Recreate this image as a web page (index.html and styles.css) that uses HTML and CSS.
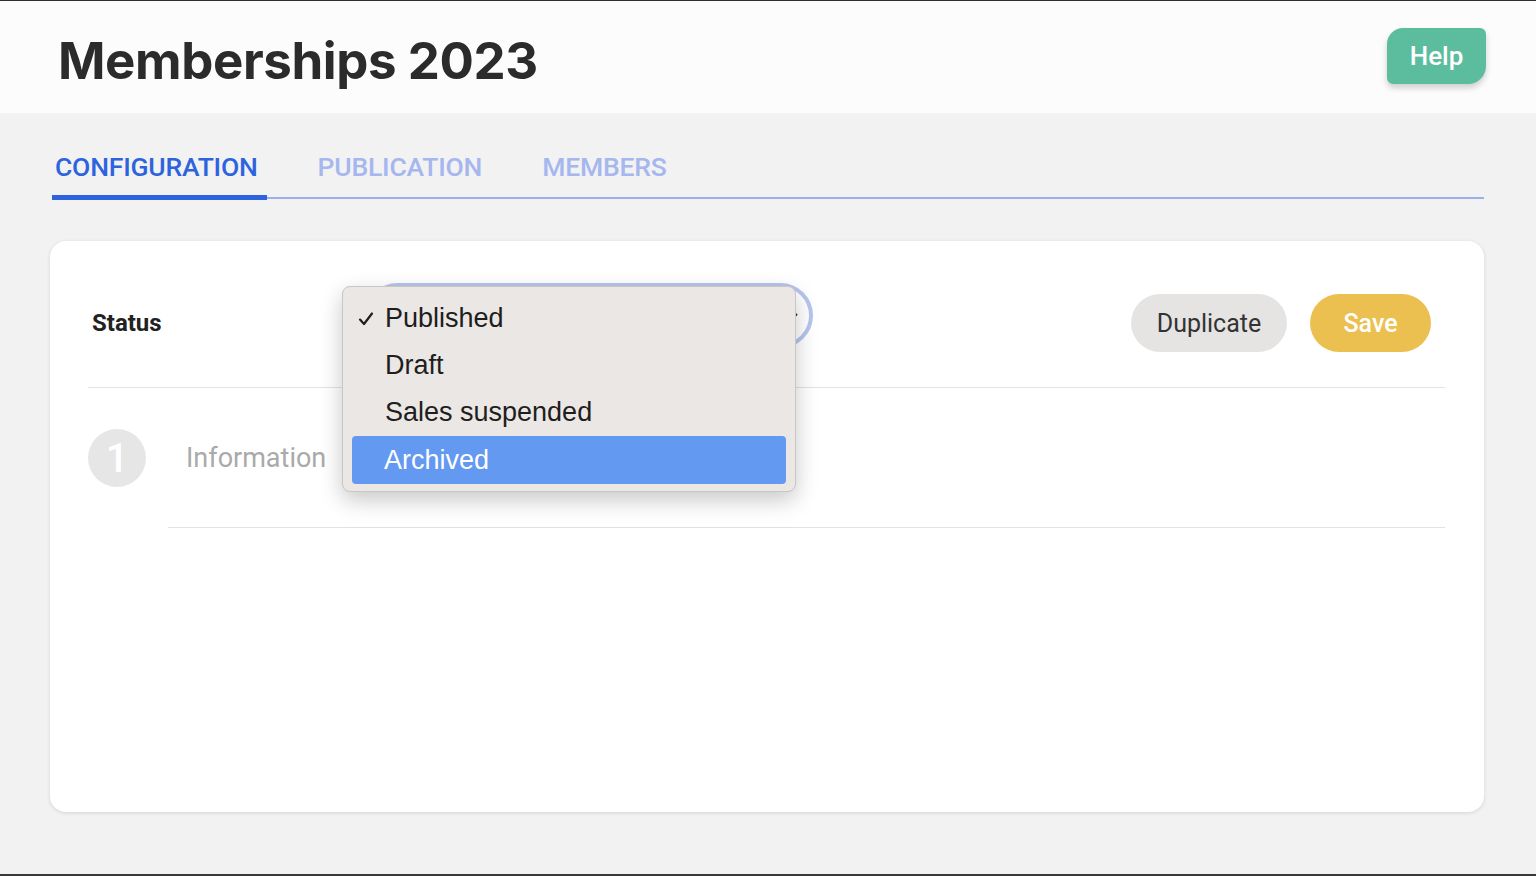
FILE: index.html
```html
<!DOCTYPE html>
<html lang="en">
<head>
<meta charset="utf-8">
<title>Memberships 2023</title>
<link rel="stylesheet" href="styles.css">
</head>
<body>
<div class="page">
  <header class="topbar">
    <h1 class="title">Memberships 2023</h1>
    <button class="help-btn">Help</button>
  </header>

  <main class="content">
    <nav class="tabs">
      <a class="tab active">CONFIGURATION</a>
      <a class="tab">PUBLICATION</a>
      <a class="tab">MEMBERS</a>
    </nav>

    <section class="card">
      <div class="status-row">
        <span class="status-label">Status</span>
        <div class="select-wrap">
          <div class="select">
            <svg class="chevron" viewBox="0 0 12 8" width="12" height="8"><path d="M1.5 1.5 6 6l4.5-4.5" fill="none" stroke="#222" stroke-width="1.8" stroke-linecap="round" stroke-linejoin="round"/></svg>
          </div>
          <ul class="menu">
            <li class="menu-item checked">
              <svg class="check" viewBox="0 0 16 16" width="16" height="16"><path d="M2 8.6 6 13 14 2.5" fill="none" stroke="#1e1e1e" stroke-width="2.2" stroke-linecap="round" stroke-linejoin="round"/></svg>
              Published
            </li>
            <li class="menu-item">Draft</li>
            <li class="menu-item">Sales suspended</li>
            <li class="menu-item selected">Archived</li>
          </ul>
        </div>
        <div class="actions">
          <button class="btn btn-grey">Duplicate</button>
          <button class="btn btn-yellow">Save</button>
        </div>
      </div>

      <div class="step-row">
        <span class="step-num">1</span>
        <div class="step-body">
          <span class="step-title">Information</span>
        </div>
      </div>
    </section>
  </main>
</div>
</body>
</html>
```

FILE: styles.css
```css
* {
  box-sizing: border-box;
}

html, body {
  margin: 0;
  padding: 0;
}

body {
  font-family: Roboto, "Liberation Sans", sans-serif;
  background: #f2f2f2;
}

.page {
  height: 876px;
  display: flex;
  flex-direction: column;
  border-top: 1px solid #2e2e2e;
  border-bottom: 2px solid #3a3a3a;
  background: #f2f2f2;
  overflow: hidden;
}

/* header */
.topbar {
  height: 112px;
  flex: none;
  background: #fcfcfc;
  display: flex;
  align-items: center;
  justify-content: space-between;
  padding: 0 50px 0 58px;
}

.title {
  margin: 6px 0 0;
  font-family: Inter, "Liberation Sans", sans-serif;
  font-weight: 700;
  font-size: 51px;
  letter-spacing: -0.4px;
  color: #2b2b2b;
}

.help-btn {
  width: 99px;
  height: 56px;
  margin-top: -2px;
  border: none;
  border-radius: 16px 6px 18px 6px;
  background: #5cbd9e;
  color: #fff;
  font-family: Roboto, sans-serif;
  font-weight: 500;
  font-size: 26px;
  box-shadow: 0 4px 6px rgba(0, 0, 0, 0.18);
  padding: 0;
}

/* tabs */
.content {
  flex: 1;
  padding: 0 52px 0 50px;
}

.tabs {
  display: flex;
  margin-left: 2px;
  border-bottom: 2px solid #9db0ee;
  height: 86px;
  align-items: flex-end;
}

.tab {
  font-size: 26.5px;
  font-weight: 500;
  color: #a6b6ee;
  padding: 0 0 15px 0;
  margin-right: 60px;
  position: relative;
  letter-spacing: -0.2px;
}

.tab.active {
  color: #2d64de;
  padding: 0 9px 15px 3px;
  margin-right: 51px;
}

.tab.active::after {
  content: "";
  position: absolute;
  left: 0;
  right: 0;
  bottom: -3px;
  height: 5px;
  background: #2d64de;
}

/* card */
.card {
  margin-top: 42px;
  height: 571px;
  background: #fff;
  border-radius: 16px;
  box-shadow: 0 1px 4px rgba(0, 0, 0, 0.12);
  padding: 0 39px 0 38px;
}

.status-row {
  display: flex;
  align-items: center;
  padding: 53px 0 35px;
  border-bottom: 1px solid #e2e2e2;
}

.status-label {
  padding-left: 4px;
  width: 277px;
  font-size: 24px;
  font-weight: 700;
  color: #222;
}

.select-wrap {
  position: relative;
  align-self: flex-start;
  margin-top: -11px;
}

.select {
  width: 448px;
  height: 65px;
  border: 4px solid #b7c5ef;
  border-radius: 33px;
  background: #fff;
  display: flex;
  align-items: center;
  justify-content: flex-end;
  padding-right: 11px;
}

.chevron {
  margin-top: 2px;
}

/* open option list */
.menu {
  position: absolute;
  left: -23px;
  top: 3px;
  width: 454px;
  height: 206px;
  margin: 0;
  padding: 8px 9px 6px;
  list-style: none;
  background: #ebe7e4;
  border: 1px solid #c9c6c4;
  border-radius: 8px;
  box-shadow: 0 8px 22px rgba(0, 0, 0, 0.22);
  font-family: "Liberation Sans", Arial, sans-serif;
  font-size: 27px;
  color: #1e1e1e;
}

.menu-item {
  height: 47px;
  display: flex;
  align-items: center;
  padding-left: 33px;
  position: relative;
  border-radius: 4px;
}

.check {
  position: absolute;
  left: 6px;
  top: 16px;
}

.menu-item.selected {
  background: #6399f1;
  color: #fff;
  height: 48px;
  padding-left: 32px;
}

/* buttons */
.actions {
  margin-left: auto;
  margin-right: 14px;
  display: flex;
  gap: 23px;
}

.btn {
  height: 58px;
  border: none;
  border-radius: 29px;
  font-family: Roboto, sans-serif;
  font-size: 25px;
  padding: 0;
}

.btn-grey {
  width: 156px;
  background: #e5e4e2;
  color: #333;
}

.btn-yellow {
  width: 121px;
  background: #ecc050;
  color: #fff;
  font-weight: 500;
}

/* steps */
.step-row {
  display: flex;
}

.step-num {
  flex: none;
  width: 58px;
  height: 58px;
  margin: 41px 0;
  border-radius: 50%;
  background: #e6e6e6;
  color: #fff;
  font-size: 40px;
  font-weight: 500;
  display: flex;
  align-items: center;
  justify-content: center;
}

.step-body {
  flex: 1;
  margin-left: 22px;
  padding-left: 18px;
  display: flex;
  align-items: center;
  border-bottom: 1px solid #e2e2e2;
}

.step-title {
  font-size: 27px;
  color: #aaa;
}
```
